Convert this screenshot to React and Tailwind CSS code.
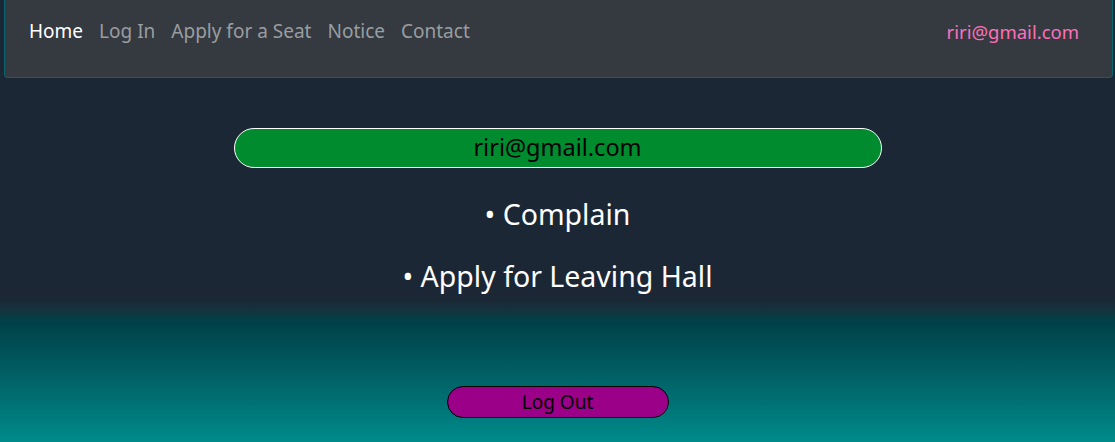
import React from 'react';

const NAV_LINKS = ['Home', 'Log In', 'Apply for a Seat', 'Notice', 'Contact'];

const App = () => {
  return (
    <div
      className="h-[442px] w-full flex flex-col bg-[#1b2735] overflow-hidden"
      style={{ fontFamily: '"Noto Sans", "Open Sans", sans-serif' }}
    >
      <nav className="h-[78px] ml-[4px] mr-[2px] shrink-0 flex items-center justify-between pl-[24px] pr-[33px] pb-[14px] bg-[#343a40] border-l border-b border-r border-[#0b6570] rounded-b-[4px]">
        <div className="flex items-center gap-[16px] text-[19px]">
          {NAV_LINKS.map((link, i) => (
            <a
              key={link}
              className={i === 0 ? 'text-white' : 'text-[#9a9da0]'}
            >
              {link}
            </a>
          ))}
        </div>
        <span className="text-[18.5px] text-[#ff6fb9]">riri@gmail.com</span>
      </nav>

      <main className="flex flex-col items-center pt-[50px]">
        <div className="w-[648px] h-[40px] flex items-center justify-center rounded-full border border-white bg-[#008b2f] text-[23.5px] text-black">
          riri@gmail.com
        </div>
        <ul className="mt-[26px] flex flex-col items-center gap-[22px] text-[28.5px] text-white leading-[40px]">
          <li>• Complain</li>
          <li>• Apply for Leaving Hall</li>
        </ul>
      </main>

      <div className="flex-1 mt-[4px] flex justify-center items-end pb-[24px] bg-gradient-to-b from-[#1b2735] via-[#003f47] via-[14%] to-[#008b8b]">
        <button className="w-[222px] h-[32px] flex items-center justify-center rounded-full border border-black bg-[#9a0088] text-[19px] text-black">
          Log Out
        </button>
      </div>
    </div>
  );
};

export default App;
